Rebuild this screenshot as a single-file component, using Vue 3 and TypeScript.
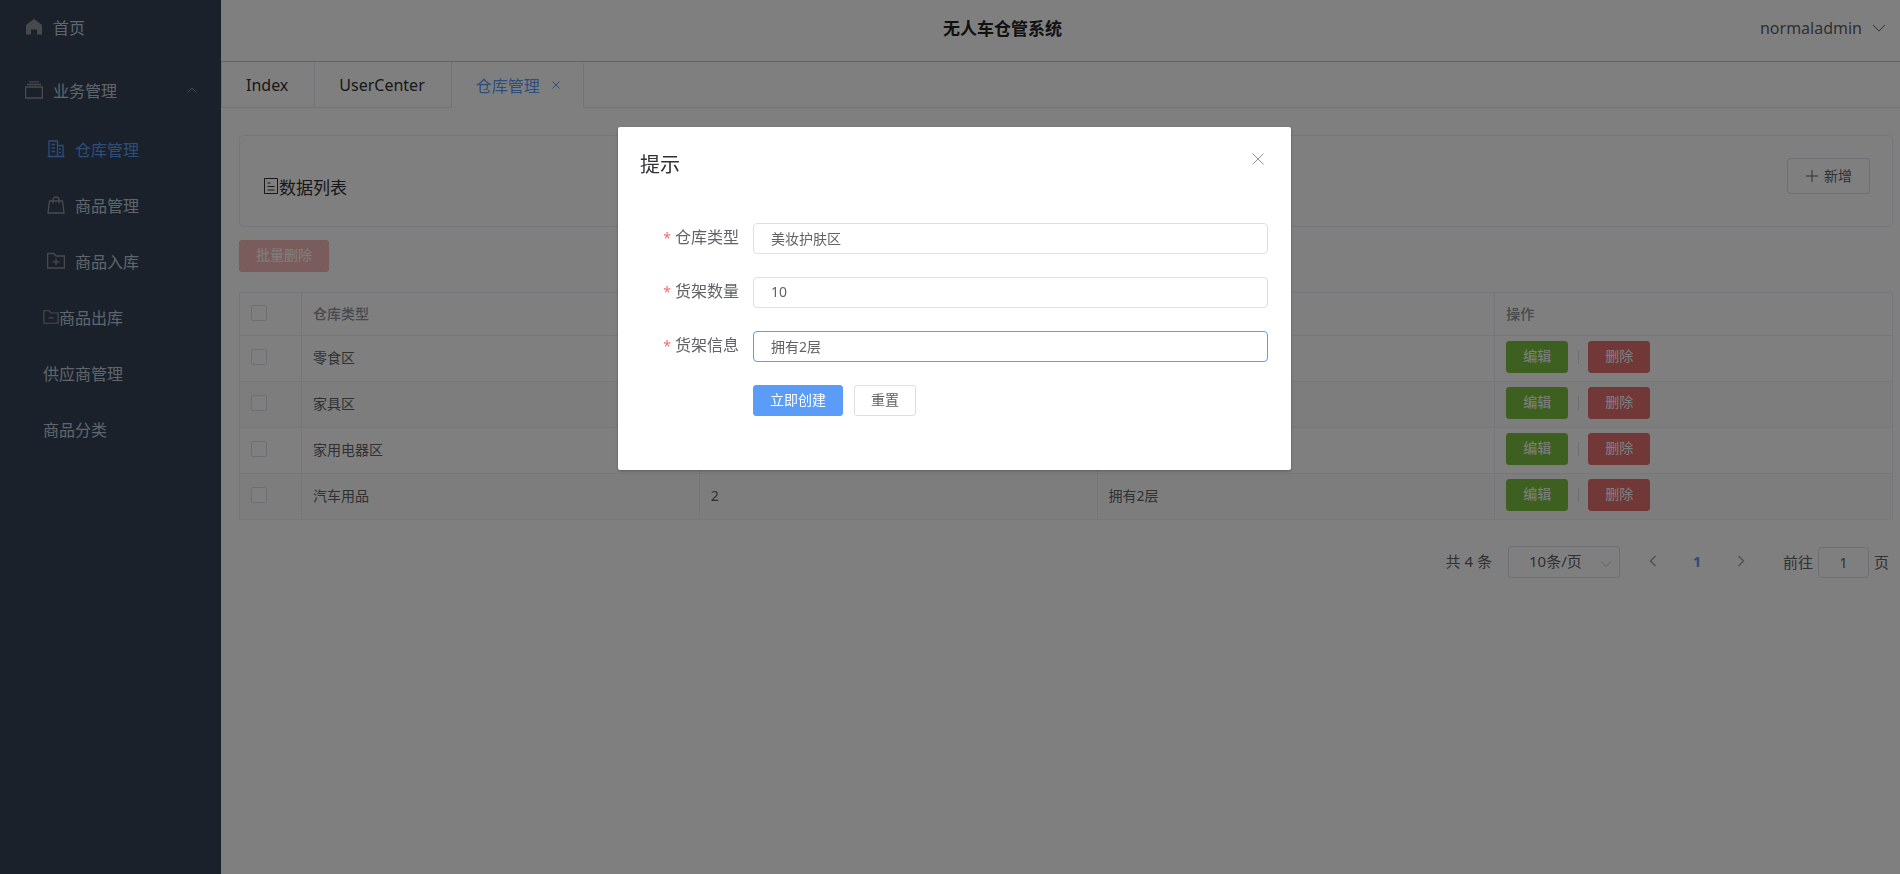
<script setup lang="ts">
import { reactive, ref } from 'vue'

interface Warehouse { type: string; count: string; info: string }
interface MenuItem { label: string; icon?: string; active?: boolean; compact?: boolean }

const rows: Warehouse[] = [
  { type: '零食区', count: '', info: '' },
  { type: '家具区', count: '', info: '' },
  { type: '家用电器区', count: '', info: '' },
  { type: '汽车用品', count: '2', info: '拥有2层' },
]

const menu: MenuItem[] = [
  { label: '仓库管理', icon: 'office', active: true },
  { label: '商品管理', icon: 'bag' },
  { label: '商品入库', icon: 'folder-add' },
  { label: '商品出库', icon: 'folder-remove', compact: true },
  { label: '供应商管理' },
  { label: '商品分类' },
]

const icons: Record<string, string> = {
  office: 'M.5 16.5h17M2 16.5V1h8.500v15.500M10.500 5.500H16v11M4.500 4.500H8M4.500 8H8M4.500 11.500H8M12 9h2M12 12.500h2',
  bag: 'M2.500 5h13L17 17H1zM6 7.500V4a3 3 0 0 1 6 0v3.500',
  'folder-add': 'M.6 1.500H7L9 4h8.400v12H.6zM9 6.500v6.500M5.800 9.800h6.500',
  'folder-remove': 'M1 2h6l2 2.500h8v11.500H1zM6 10h6',
}

const form = reactive({ type: '美妆护肤区', count: '10', info: '拥有2层' })
const fields: { key: keyof typeof form; label: string }[] = [
  { key: 'type', label: '仓库类型' },
  { key: 'count', label: '货架数量' },
  { key: 'info', label: '货架信息' },
]
const current = ref<keyof typeof form>('info')
const visible = ref(true)
const page = ref('1')

function reset() {
  form.type = ''
  form.count = ''
  form.info = ''
}
</script>

<template>
  <div class="app">
    <nav class="sidebar">
      <a href="#" class="home">
        <svg class="icon" viewBox="0 0 18 18"><path class="solid" d="M9 1 17 7v9.500h-5v-5H6v5H1V7z" /></svg>
        <span>首页</span>
      </a>
      <button type="button" class="group">
        <svg class="icon" viewBox="0 0 18 18"><path d="M.6 6h16.800v11H.6zM2 3.500h14M4 .8h10" /></svg>
        <span>业务管理</span>
        <svg class="caret" viewBox="0 0 12 12"><path d="M1.500 8.500 6 4l4.500 4.500" /></svg>
      </button>
      <a v-for="item in menu" :key="item.label" href="#" class="sub" :class="{ active: item.active, wide: item.icon && !item.compact }">
        <svg v-if="item.icon" class="icon" :class="{ small: item.compact }" viewBox="0 0 18 18"><path :d="icons[item.icon]" /></svg>
        <span>{{ item.label }}</span>
      </a>
    </nav>

    <div class="main">
      <header class="header">
        <h1>无人车仓管系统</h1>
        <button type="button" class="user">
          normaladmin
          <svg viewBox="0 0 14 14"><path d="M1 4l6 6 6-6" /></svg>
        </button>
      </header>

      <div class="tabs">
        <a href="#" class="tab">Index</a>
        <a href="#" class="tab">UserCenter</a>
        <a href="#" class="tab current">仓库管理
          <svg viewBox="0 0 10 10"><path d="M1.500 1.500l7 7M8.500 1.500l-7 7" /></svg>
        </a>
      </div>

      <main class="content">
        <section class="card">
          <h2>
            <svg viewBox="0 0 14 16"><path d="M.5.5h13v15H.5zM3.500 5h3M3.500 8.500h7M3.500 12h7" /></svg>数据列表
          </h2>
          <button type="button" class="btn add">
            <svg viewBox="0 0 12 12"><path d="M6 0v12M0 6h12" /></svg>新增
          </button>
        </section>

        <button type="button" class="btn batch" disabled>批量删除</button>

        <table>
          <colgroup><col class="pick" /><col /><col /><col /><col /></colgroup>
          <thead>
            <tr>
              <th><input type="checkbox" aria-label="全选" /></th>
              <th>仓库类型</th>
              <th>货架数量</th>
              <th>货架信息</th>
              <th>操作</th>
            </tr>
          </thead>
          <tbody>
            <tr v-for="row in rows" :key="row.type">
              <td><input type="checkbox" :aria-label="row.type" /></td>
              <td>{{ row.type }}</td>
              <td>{{ row.count }}</td>
              <td>{{ row.info }}</td>
              <td>
                <div class="actions">
                  <button type="button" class="btn edit">编辑</button>
                  <i class="divider"></i>
                  <button type="button" class="btn remove">删除</button>
                </div>
              </td>
            </tr>
          </tbody>
        </table>

        <div class="pagination">
          <span>共 4 条</span>
          <div class="sizes">
            <select aria-label="每页条数"><option>10条/页</option><option>20条/页</option></select>
            <svg viewBox="0 0 12 12"><path d="M1 3.500l5 5 5-5" /></svg>
          </div>
          <button type="button" class="step" aria-label="上一页"><svg viewBox="0 0 12 12"><path d="M8.500 1l-5 5 5 5" /></svg></button>
          <button type="button" class="step number">1</button>
          <button type="button" class="step" aria-label="下一页"><svg viewBox="0 0 12 12"><path d="M3.500 1l5 5-5 5" /></svg></button>
          <label class="jump">前往<input v-model="page" type="text" />页</label>
        </div>
      </main>
    </div>

    <div v-if="visible" class="overlay">
      <div class="dialog" role="dialog" aria-labelledby="dialog-title">
        <div class="dialog-head">
          <h3 id="dialog-title">提示</h3>
          <button type="button" class="close" aria-label="关闭" @click="visible = false">
            <svg viewBox="0 0 12 12"><path d="M.5.5l11 11M11.500.5l-11 11" /></svg>
          </button>
        </div>
        <form @submit.prevent>
          <div v-for="field in fields" :key="field.key" class="field">
            <label :for="field.key"><em>*</em>{{ field.label }}</label>
            <input :id="field.key" v-model="form[field.key]" type="text" :class="{ focused: current === field.key }" @focus="current = field.key" />
          </div>
          <div class="buttons">
            <button type="submit" class="btn primary">立即创建</button>
            <button type="button" class="btn" @click="reset">重置</button>
          </div>
        </form>
      </div>
    </div>
  </div>
</template>

<style>
body {
  margin: 0;
}
</style>

<style scoped>
.app {
  display: flex;
  min-height: 100vh;
  background: #fff;
  color: #606266;
  font-family: 'Noto Sans', 'Noto Sans CJK SC', sans-serif;
  font-size: 14px;
}
* {
  box-sizing: border-box;
}
button,
input,
select {
  margin: 0;
  font: inherit;
  color: inherit;
}
button {
  cursor: pointer;
}
a {
  color: inherit;
  text-decoration: none;
}
h1,
h2,
h3 {
  margin: 0;
  font-weight: 400;
}
svg {
  flex: none;
  fill: none;
  stroke: currentColor;
  stroke-width: 1;
}

.sidebar {
  flex: none;
  width: 221px;
  background: #364254;
  color: #bfcbd9;
  font-size: 16px;
}
.home,
.group,
.sub {
  display: flex;
  align-items: center;
}
.home {
  height: 54px;
  padding-left: 25px;
  gap: 10px;
}
.group {
  width: 100%;
  height: 62px;
  margin-top: 5px;
  padding: 0 23px 0 25px;
  gap: 10px;
  border: 0;
  background: none;
}
.icon {
  width: 18px;
  height: 18px;
  color: #909399;
  stroke-width: 1.3;
}
.icon.small {
  width: 16px;
  height: 16px;
}
.solid {
  fill: currentColor;
  stroke: none;
}
.caret {
  width: 12px;
  height: 12px;
  margin-left: auto;
  color: #909399;
}
.sub {
  height: 56px;
  padding-left: 43px;
}
.sub.wide {
  padding-left: 47px;
  gap: 10px;
}
.sub.active,
.sub.active .icon {
  color: #5a9cf8;
}

.main {
  flex: 1;
  min-width: 0;
}
.header {
  display: flex;
  align-items: center;
  height: 62px;
  padding: 0 14px 6px 24px;
  border-bottom: 1px solid #c8c8c8;
}
.header h1 {
  flex: 1;
  color: #222;
  font-size: 17px;
  font-weight: 700;
  text-align: center;
}
.user {
  display: flex;
  align-items: center;
  gap: 10px;
  padding: 0;
  border: 0;
  background: none;
  font-size: 16px;
}
.user svg {
  width: 14px;
  height: 14px;
}
.tabs {
  display: flex;
  height: 46px;
  border-bottom: 1px solid #e4e7ed;
}
.tab {
  display: flex;
  align-items: center;
  height: 46px;
  padding: 0 26px 0 24px;
  border-right: 1px solid #e4e7ed;
  border-bottom: 1px solid #e4e7ed;
  color: #303133;
  font-size: 16px;
}
.tab:first-child {
  border-left: 1px solid #e4e7ed;
}
.tab.current {
  gap: 11px;
  padding-right: 22px;
  border-bottom-color: #fff;
  border-top-right-radius: 4px;
  color: #5a9cf8;
}
.tab svg {
  width: 10px;
  height: 10px;
}

.content {
  padding: 27px 7px 0 18px;
}
.card {
  display: flex;
  justify-content: space-between;
  height: 92px;
  padding: 22px 22px 0 24px;
  border: 1px solid #ebeef5;
  border-radius: 4px;
}
.card h2 {
  display: flex;
  align-items: center;
  height: 56px;
  color: #303133;
  font-size: 17px;
}
.card h2 svg {
  width: 14px;
  height: 16px;
  margin-right: 1px;
}
.btn {
  display: inline-flex;
  align-items: center;
  justify-content: center;
  height: 32px;
  padding: 0 16px 2px;
  border: 1px solid #dcdfe6;
  border-radius: 3px;
  background: #fff;
  font-size: 14px;
  line-height: 20px;
}
.add {
  height: 36px;
  padding: 0 17px 0 18px;
  gap: 6px;
}
.add svg {
  width: 12px;
  height: 12px;
}
.batch {
  display: flex;
  margin-top: 13px;
  border-color: #f6b8b8;
  background: #f6b8b8;
  color: #fff;
}

table {
  width: 100%;
  margin-top: 20px;
  border-collapse: collapse;
  table-layout: fixed;
}
.pick {
  width: 62px;
}
th,
td {
  height: 46px;
  padding: 0 11px 3px;
  border: 1px solid #ebeef5;
  text-align: left;
}
th {
  height: 43px;
  color: #909399;
  font-weight: 500;
}
tbody tr:nth-child(even) {
  background: #fafafa;
}
input[type='checkbox'] {
  display: block;
  width: 16px;
  height: 16px;
  appearance: none;
  border: 1px solid #dcdfe6;
  border-radius: 2px;
  background: #fff;
}
.actions {
  display: flex;
  align-items: center;
}
.edit,
.remove {
  color: #fff;
}
.edit {
  border-color: #7bc143;
  background: #7bc143;
}
.remove {
  border-color: #e56e6e;
  background: #e56e6e;
}
.divider {
  width: 1px;
  height: 14px;
  margin: 0 9px 0 10px;
  background: #dcdfe6;
}

.pagination {
  display: flex;
  align-items: center;
  justify-content: flex-end;
  margin-top: 26px;
  padding-right: 4px;
  font-size: 15px;
  line-height: 20px;
}
.pagination > span {
  padding-bottom: 2px;
}
.sizes {
  position: relative;
  width: 112px;
  margin: 0 11px 0 16px;
}
.sizes select {
  display: block;
  width: 100%;
  height: 32px;
  padding: 0 20px 2px;
  appearance: none;
  border: 1px solid #dcdfe6;
  border-radius: 3px;
  background: #fff;
}
.sizes svg {
  position: absolute;
  top: 12px;
  right: 8px;
  width: 12px;
  height: 12px;
  color: #c0c4cc;
}
.step {
  display: flex;
  align-items: center;
  justify-content: center;
  width: 44px;
  height: 32px;
  padding: 0 0 2px;
  border: 0;
  background: none;
  color: #a0a4ac;
}
.step svg {
  width: 12px;
  height: 12px;
  stroke-width: 1.5;
}
.number {
  color: #5a9cf8;
  font-weight: 700;
}
.jump {
  display: flex;
  align-items: center;
  gap: 5px;
  margin-left: 20px;
}
.jump input {
  width: 51px;
  height: 31px;
  padding: 0;
  border: 1px solid #dcdfe6;
  border-radius: 4px;
  background: #fff;
  font-size: 14px;
  text-align: center;
}

.overlay {
  position: fixed;
  inset: 0;
  display: flex;
  align-items: flex-start;
  justify-content: center;
  padding: 127px 0 0 9px;
  background: rgba(0, 0, 0, 0.5);
}
.dialog {
  width: 673px;
  max-width: 90%;
  padding: 24px 23px 54px 22px;
  border-radius: 2px;
  background: #fff;
  box-shadow: 0 1px 3px rgba(0, 0, 0, 0.3);
}
.dialog-head {
  display: flex;
  justify-content: space-between;
}
.dialog-head h3 {
  color: #303133;
  font-size: 20px;
  line-height: 28px;
}
.close {
  display: flex;
  height: 20px;
  padding: 2px 4px;
  border: 0;
  background: none;
  color: #909399;
}
.close svg {
  width: 12px;
  height: 12px;
}
form {
  padding-top: 44px;
}
.field {
  display: flex;
  align-items: flex-start;
  height: 31px;
  margin-bottom: 23px;
}
.field label {
  flex: none;
  width: 99px;
  font-size: 16px;
  line-height: 28px;
  text-align: right;
}
.field em {
  margin-right: 4px;
  color: #f56c6c;
  font-size: 14px;
  font-style: normal;
}
.field input {
  flex: 1;
  min-width: 0;
  height: 31px;
  margin-left: 14px;
  padding: 0 17px 2px;
  border: 1px solid #dcdfe6;
  border-radius: 4px;
  outline: 0;
  background: #fff;
}
.field input.focused {
  border-color: #5a9cf8;
}
.buttons {
  display: flex;
  gap: 11px;
  margin-left: 113px;
}
.buttons .btn {
  height: 31px;
}
.primary {
  border-color: #5a9cf8;
  background: #5a9cf8;
  color: #fff;
}
</style>
